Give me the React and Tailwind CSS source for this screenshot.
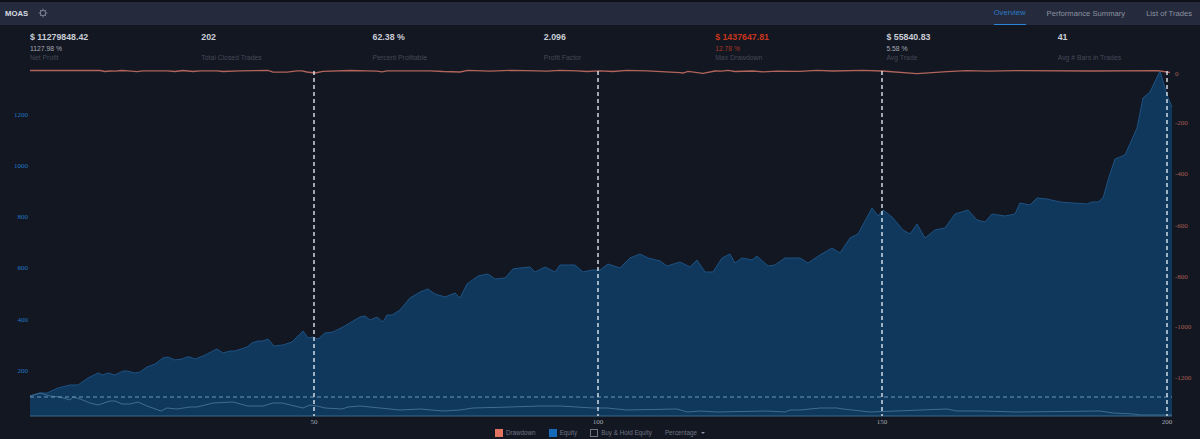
const equity = [[30,396],[40,393],[47,393],[58,388],[70,385],[78,385],[88,378],[98,373],[103,375],[108,373],[115,375],[123,371],[127,371],[135,373],[140,372],[147,367],[155,364],[163,358],[168,357],[175,360],[182,359],[187,357],[190,357],[195,359],[203,356],[217,349],[223,353],[230,351],[235,351],[247,347],[252,343],[258,341],[263,341],[268,339],[274,346],[283,345],[292,342],[303,331],[308,338],[313,337],[318,339],[325,333],[333,332],[343,327],[360,317],[365,316],[370,320],[377,317],[383,322],[387,315],[392,315],[400,310],[410,298],[420,292],[428,289],[435,294],[445,297],[455,293],[460,298],[467,284],[478,276],[488,274],[495,279],[505,278],[513,269],[520,268],[530,267],[535,272],[545,267],[555,272],[560,265],[575,265],[583,272],[592,270],[600,270],[608,264],[620,268],[630,258],[640,254],[648,258],[660,261],[667,266],[680,262],[690,267],[697,260],[705,272],[713,272],[722,258],[730,254],[735,263],[742,258],[752,260],[757,256],[768,266],[775,265],[785,258],[800,258],[808,263],[820,255],[832,248],[840,253],[850,238],[858,234],[872,208],[878,216],[883,210],[892,217],[903,230],[910,234],[917,224],[925,238],[935,230],[945,228],[955,214],[968,210],[977,220],[985,222],[992,214],[1005,216],[1015,214],[1020,203],[1030,205],[1037,198],[1047,199],[1060,202],[1087,204],[1092,202],[1098,202],[1103,198],[1109,177],[1115,159],[1125,155],[1137,128],[1143,98],[1150,92],[1160,71],[1167,95],[1172,107]];
const hold = [[30,396],[40,393],[50,396],[60,397],[70,400],[73,397],[80,399],[90,403],[98,405],[110,401],[115,401],[122,404],[130,404],[138,402],[147,406],[161,411],[167,408],[177,409],[190,407],[197,407],[213,403],[233,402],[248,406],[263,406],[273,403],[282,403],[303,408],[310,405],[317,406],[325,408],[342,409],[348,407],[360,406],[380,408],[390,409],[400,410],[420,409],[443,411],[460,410],[473,408],[510,407],[540,406],[560,406],[593,408],[607,408],[627,410],[677,409],[687,412],[700,411],[717,412],[767,411],[785,412],[790,410],[800,410],[820,408],[837,408],[843,409],[870,412],[947,409],[957,411],[983,411],[1017,412],[1100,411],[1113,413],[1133,414],[1140,415],[1172,415]];
const drawdown = [[30,70.5],[100,70.5],[105,71.5],[110,71],[115,71.2],[122,70.5],[128,70.8],[137,71.6],[143,70.8],[167,70.8],[175,71.5],[183,70.5],[193,71.5],[200,70.8],[217,70.8],[223,71.5],[240,70.8],[268,70.5],[273,72.2],[287,72.2],[297,70.8],[302,70.8],[307,72],[315,73],[323,71.3],[350,70.5],[367,70.8],[377,71.2],[382,71.8],[387,70.8],[430,70.8],[443,71.5],[460,72],[468,70.3],[490,71.2],[513,70.3],[537,70.8],[547,71.2],[560,70.3],[577,70.8],[587,71.5],[600,70.8],[613,71.5],[627,70.3],[647,70.8],[680,72.6],[683,73],[688,71.3],[703,73.3],[715,71],[722,71.2],[728,70.3],[735,71.5],[753,71],[763,71.8],[777,71.2],[800,71.4],[817,70.3],[833,71],[863,70.3],[882,71],[917,73.6],[947,71.6],[967,70.7],[987,71.2],[1017,70.7],[1093,71],[1158,70.7],[1170,72.5]];
const toPts = (a) => a.map((p) => p.join(",")).join(" ");
const areaPts = toPts([[30, 416], ...equity, [1172, 416]]);
const stats = [
  { v: "$ 11279848.42", s: "1127.98 %", l: "Net Profit" },
  { v: "202", s: "", l: "Total Closed Trades" },
  { v: "62.38 %", s: "", l: "Percent Profitable" },
  { v: "2.096", s: "", l: "Profit Factor" },
  { v: "$ 1437647.81", s: "12.78 %", l: "Max Drawdown", red: true },
  { v: "$ 55840.83", s: "5.58 %", l: "Avg Trade" },
  { v: "41", s: "", l: "Avg # Bars in Trades" },
];
const left = [[1200,117],[1000,168],[800,219],[600,270],[400,322],[200,373]];
const right = [[0,76],[-200,125],[-400,176],[-600,228],[-800,279],[-1000,329],[-1200,380]];
const axisFont = { fontFamily: '"Liberation Serif", serif' };

function Gear() {
  return (
    <svg width="10" height="10" viewBox="0 0 24 24" fill="none" stroke="#8b90a0" strokeWidth="2">
      <circle cx="12" cy="12" r="6.5" />
      <path d="M12 1.5v4M12 18.5v4M1.5 12h4M18.5 12h4M4.6 4.6l2.8 2.8M16.6 16.6l2.8 2.8M4.6 19.4l2.8-2.8M16.6 7.4l2.8-2.8" />
    </svg>
  );
}

export default function App() {
  return (
    <div className="w-[1200px] h-[439px] overflow-hidden flex flex-col bg-[#131722] font-['Liberation_Sans',sans-serif]">
      <div className="h-[2px] bg-[#0e111a]" />
      <header className="h-[23px] bg-[#252b3c] flex items-center justify-between pl-[5px]">
        <div className="flex items-center gap-[10px]">
          <span className="text-[7.7px] font-bold text-[#d8dbe3]">MOAS</span>
          <Gear />
        </div>
        <nav className="flex items-stretch h-full text-[7.65px] text-[#8b90a0] gap-[21px] pr-[8px]">
          <span className="flex items-center border-b-[1.5px] border-[#2b86d8] text-[#2b7cc8] w-[32px] justify-center">Overview</span>
          <span className="flex items-center">Performance Summary</span>
          <span className="flex items-center">List of Trades</span>
        </nav>
      </header>
      <section className="h-[39px] pl-[30px] pt-[7px] grid grid-cols-7 w-[1229px]">
        {stats.map((st) => (
          <div key={st.l} className="flex flex-col">
            <span className={`text-[8.8px] leading-[11px] font-bold ${st.red ? "text-[#c8351c]" : "text-[#c9ccd5]"}`}>{st.v}</span>
            <span className={`text-[6.8px] leading-[9px] mt-[1px] h-[9px] ${st.red ? "text-[#a83522]" : "text-[#a4a8b4]"}`}>{st.s}</span>
            <span className="text-[6.85px] leading-[9px] text-[#434856]">{st.l}</span>
          </div>
        ))}
      </section>
      <svg className="block w-[1200px] h-[362px] shrink-0" viewBox="0 64 1200 362">
        <polygon points={areaPts} fill="#10375c" />
        <polyline points={toPts(equity)} fill="none" stroke="#1d5284" strokeWidth="1" />
        <polyline points={toPts(hold)} fill="none" stroke="#3f6d8f" strokeWidth="1" />
        <line x1="30" y1="416" x2="1172" y2="416" stroke="#3a6a8e" strokeWidth="1" />
        <line x1="30" y1="397" x2="1172" y2="397" stroke="#6a9cc4" strokeWidth="1" strokeDasharray="4 3" />
        <polyline points={toPts(drawdown)} fill="none" stroke="#b0645a" strokeWidth="1.3" />
        {[314, 598, 882, 1167].map((x) => (
          <line key={x} x1={x} y1="71" x2={x} y2="416" stroke="#e8f0f8" strokeOpacity="0.95" strokeWidth="1.4" strokeDasharray="4 3" />
        ))}
        {left.map(([t, y]) => (
          <text key={t} x="28" y={y} textAnchor="end" fontSize="7" fill="#2178c4" style={axisFont}>{t}</text>
        ))}
        {right.map(([t, y]) => (
          <text key={t} x="1175" y={y} fontSize="7" fill="#a85f52" style={axisFont}>{t}</text>
        ))}
        {[[50,314],[100,598],[150,882],[200,1167]].map(([t, x]) => (
          <text key={t} x={x} y="424" textAnchor="middle" fontSize="7" fill="#a4a8b2" style={axisFont}>{t}</text>
        ))}
      </svg>
      <footer className="h-[13px] flex items-start justify-center text-[6.3px] text-[#6f7482]">
        <div className="flex items-center h-[9px] mt-[2px]">
          <span className="w-[8px] h-[8px] bg-[#e0735f] mr-[3px]" />
          <span>Drawdown</span>
          <span className="w-[8px] h-[8px] bg-[#136ab8] ml-[13px] mr-[3px]" />
          <span>Equity</span>
          <span className="w-[8px] h-[8px] border border-[#6f7482] ml-[13px] mr-[3px]" />
          <span>Buy &amp; Hold Equity</span>
          <span className="ml-[13px]">Percentage</span>
          <span className="ml-[4px] w-0 h-0 border-x-[2px] border-x-transparent border-t-[2px] border-t-[#8b90a0]" />
        </div>
      </footer>
    </div>
  );
}
